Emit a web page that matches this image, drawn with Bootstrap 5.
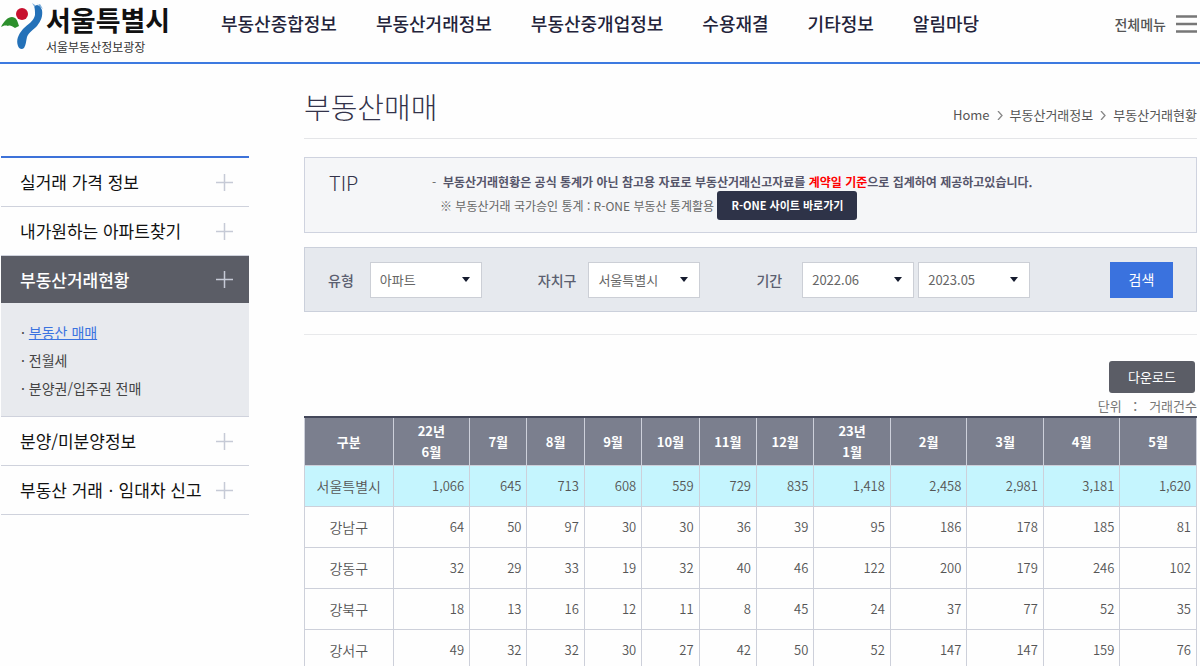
<!DOCTYPE html>
<html lang="ko">
<head>
<meta charset="utf-8">
<meta name="viewport" content="width=device-width, initial-scale=1">
<title>서울부동산정보광장 - 부동산매매</title>
<link href="https://cdn.jsdelivr.net/npm/bootstrap@5.3.0/dist/css/bootstrap.min.css" rel="stylesheet">
<style>
  body { font-family: "Noto Sans CJK KR", sans-serif; font-size: 14px; line-height: 20px; color: #666; background: #fefefe; }
  a { color: inherit; text-decoration: none; }
  .site-head { height: 64px; border-bottom: 2px solid #3d7ae0; }
  .brand { width: 221px; color: #111; }
  .brand-name { font-size: 27px; line-height: 32px; font-weight: 700; }
  .brand-sub { font-size: 12px; line-height: 14px; color: #333; }
  .main-menu { gap: 39px; padding-top: 11px; font-size: 18px; line-height: 24px; font-weight: 500; color: #23233a; }
  .all-menu { font-size: 14px; font-weight: 500; color: #555; gap: 10px; padding: 14px 3px 0 0; }
  .page-body { padding: 0 3px 0 1px; }
  .side { width: 248px; margin-top: 92px; border-top: 2px solid #3d72d9; }
  .side-link { height: 49px; padding: 0 16px 0 19px; font-size: 17px; color: #111; border-bottom: 1px solid #cfd2dc; }
  .side-link.on { height: 47px; background: #5b5d66; color: #fff; font-weight: 500; border: 0; }
  .side-sub { background: #e8eaee; padding: 15px 20px 14px; border-bottom: 1px solid #cfd2dc; color: #444; }
  .side-sub li { line-height: 28px; }
  .side-sub .now { color: #3a73e0; text-decoration: underline; }
  .plus { color: #c6cad6; }
  .content { margin-left: 55px; }
  .title-bar { height: 75px; border-bottom: 1px solid #e4e5e8; }
  .page-title { font-size: 29px; line-height: 40px; font-weight: 300; color: #33334a; margin-top: 22px; }
  .crumbs { font-size: 13px; color: #555; gap: 7px; margin-bottom: 13px; }
  .tip { margin-top: 18px; height: 76px; background: #f5f6f8; border: 1px solid #cfd3df; padding: 15px 24px; font-size: 12px; line-height: 18px; }
  .tip h2 { width: 103px; font-size: 20px; line-height: 20px; font-weight: 300; color: #33334a; }
  .tip strong { color: #55556a; }
  .tip .hot { color: #f00; }
  .btn-rone { --bs-btn-padding-x: 14px; --bs-btn-padding-y: 0px; --bs-btn-font-size: 11px; --bs-btn-border-radius: 3px; --bs-btn-color: #fff; --bs-btn-bg: #2e3348; --bs-btn-hover-color: #fff; --bs-btn-hover-bg: #404660; --bs-btn-border-width: 0; height: 29px; font-weight: 700; }
  .filters { margin-top: 14px; height: 65px; background: #e6e9ee; border: 1px solid #cbd0db; padding: 0 23px; gap: 56px; }
  .filters label { font-weight: 500; color: #5b5f70; }
  .gap-label { gap: 12px; }
  .pick { width: 112px; height: 36px; border-radius: 0; border-color: #cccfd6; padding: 0 24px 0 9px; font-size: 13px; color: #666; background-color: #fff;
    background-image: url("data:image/svg+xml,%3Csvg xmlns='http://www.w3.org/2000/svg' viewBox='0 0 8 5'%3E%3Cpath fill='%23151b2e' d='M0 0h8L4 5z'/%3E%3C/svg%3E"); background-size: 8px 5px; background-position: right 11px center; }
  .btn-find { width: 63px; height: 36px; padding: 0; border: 0; border-radius: 0; background: #3a72de; color: #fff; font-size: 14px; }
  .rule { margin-top: 22px; border-top: 1px solid #e8e9eb; padding-top: 26px; }
  .btn-down { width: 86px; height: 32px; padding: 0; border: 0; border-radius: 3px; background: #5b5d66; color: #fff; font-size: 13px; margin-right: 2px; }
  .unit { font-size: 13px; line-height: 16px; color: #777; margin-top: 5px; margin-bottom: 2px; white-space: pre; }
  .deals { table-layout: fixed; border-color: #cdd0da; margin: 0; color: #555; font-size: 13px; }
  .deals > :not(caption) > * > * { padding: 0 5px; height: 41px; text-align: right; vertical-align: middle; color: inherit; background: none; font-weight: 350; }
  .deals > thead > tr > th { height: 48px; font-size: 13px; line-height: 21px; font-weight: 700; color: #fff; background: #7b7f8e; text-align: center; border-top: 2px solid #44485a; }
  .deals > tbody > tr > th { font-size: 14px; text-align: center; }
  .deals > tbody > .total { background: #c5f5fe; }
  .c-name { width: 88px; } .c-wide { width: 76px; } .c-thin { width: 57px; }
</style>
</head>
<body>
<header class="site-head d-flex align-items-start">
  <a class="brand d-flex flex-shrink-0" href="#">
    <svg class="flex-shrink-0" width="46" height="52" viewBox="0 0 46 52" aria-hidden="true">
      <path fill="#2471b8" d="M34 6l3-1 3 1 2 4c1 6-1 11-5 16-4 4-8 6-10 11-1 4-1 8-3 11-2 2-5 1-6-2-2-6 0-11 5-17 5-5 11-8 12-14 0-4 0-6-1-9z"/>
      <path fill="#7fb0dc" d="M32 3l3 2v3zM37 3l1 2 2-1 3 5-4-3z"/>
      <path fill="#2c8f2c" d="M1 27C4 21 8 17 12 17c3 0 5 2 6 6l1 3-4 2c-3-2-5-3-7-2-3-1-5 0-7 1z"/>
      <circle cx="22" cy="14" r="6" fill="#c8102e"/>
    </svg>
    <span class="d-flex flex-column pt-1"><span class="brand-name">서울특별시</span><span class="brand-sub mt-1">서울부동산정보광장</span></span>
  </a>
  <nav class="main-menu d-flex text-nowrap">
    <a href="#">부동산종합정보</a><a href="#">부동산거래정보</a><a href="#">부동산중개업정보</a><a href="#">수용재결</a><a href="#">기타정보</a><a href="#">알림마당</a>
  </nav>
  <a class="all-menu ms-auto d-flex align-items-center text-nowrap" href="#">전체메뉴
    <svg width="21" height="18" aria-hidden="true"><path d="M0 1.500h21M0 9h21M0 16.500h21" stroke="#777" stroke-width="2.500"/></svg>
  </a>
</header>

<div class="page-body d-flex">
  <aside class="side flex-shrink-0">
    <a class="side-link d-flex align-items-center justify-content-between" href="#">실거래 가격 정보<svg class="plus" width="17" height="17" aria-hidden="true"><path d="M0 8.500h17M8.500 0v17" stroke="currentColor" stroke-width="1.500"/></svg></a>
    <a class="side-link d-flex align-items-center justify-content-between" href="#">내가원하는 아파트찾기<svg class="plus" width="17" height="17" aria-hidden="true"><path d="M0 8.500h17M8.500 0v17" stroke="currentColor" stroke-width="1.500"/></svg></a>
    <a class="side-link on d-flex align-items-center justify-content-between" href="#">부동산거래현황<svg class="plus" width="17" height="17" aria-hidden="true"><path d="M0 8.500h17M8.500 0v17" stroke="currentColor" stroke-width="1.500"/></svg></a>
    <ul class="side-sub list-unstyled m-0">
      <li>· <a class="now" href="#">부동산 매매</a></li>
      <li>· <a href="#">전월세</a></li>
      <li>· <a href="#">분양권/입주권 전매</a></li>
    </ul>
    <a class="side-link d-flex align-items-center justify-content-between" href="#">분양/미분양정보<svg class="plus" width="17" height="17" aria-hidden="true"><path d="M0 8.500h17M8.500 0v17" stroke="currentColor" stroke-width="1.500"/></svg></a>
    <a class="side-link d-flex align-items-center justify-content-between" href="#">부동산 거래ㆍ임대차 신고<svg class="plus" width="17" height="17" aria-hidden="true"><path d="M0 8.500h17M8.500 0v17" stroke="currentColor" stroke-width="1.500"/></svg></a>
  </aside>

  <main class="content flex-grow-1">
    <div class="title-bar d-flex justify-content-between align-items-start">
      <h1 class="page-title mb-0">부동산매매</h1>
      <nav class="crumbs d-flex align-items-center mt-auto">
        <a href="#">Home</a>
        <svg width="6" height="9" aria-hidden="true"><path d="M1 0l4 4.500L1 9" fill="none" stroke="#888" stroke-width="1.300"/></svg>
        <a href="#">부동산거래정보</a>
        <svg width="6" height="9" aria-hidden="true"><path d="M1 0l4 4.500L1 9" fill="none" stroke="#888" stroke-width="1.300"/></svg>
        <a href="#">부동산거래현황</a>
      </nav>
    </div>

    <section class="tip d-flex align-items-start">
      <h2 class="m-0 flex-shrink-0">TIP</h2>
      <div class="text-nowrap">
        <div>-&nbsp; <strong>부동산거래현황은 공식 통계가 아닌 참고용 자료로 부동산거래신고자료를 <span class="hot">계약일 기준</span>으로 집계하여 제공하고있습니다.</strong></div>
        <div class="d-flex align-items-center ps-2"><span>※ 부동산거래 국가승인 통계 : R-ONE 부동산 통계활용&nbsp;</span><button class="btn btn-rone" type="button">R-ONE 사이트 바로가기</button></div>
      </div>
    </section>

    <form class="filters d-flex align-items-center">
      <div class="d-flex align-items-center gap-3"><label for="kind">유형</label><select id="kind" class="form-select pick"><option>아파트</option></select></div>
      <div class="d-flex align-items-center gap-label"><label for="gu">자치구</label><select id="gu" class="form-select pick"><option>서울특별시</option></select></div>
      <div class="d-flex align-items-center"><label class="me-3" for="from">기간</label><select id="from" class="form-select pick ms-1 me-1"><option>2022.06</option></select><select class="form-select pick" aria-label="종료 월"><option>2023.05</option></select></div>
      <button class="btn btn-find ms-auto" type="button">검색</button>
    </form>

    <div class="rule d-flex flex-column align-items-end">
      <button class="btn btn-down" type="button">다운로드</button>
      <div class="unit">단위  ：  거래건수</div>
    </div>

    <table class="table table-bordered deals">
      <colgroup><col class="c-name"><col class="c-wide"><col class="c-thin" span="6"><col class="c-wide" span="5"></colgroup>
      <thead><tr><th>구분</th><th>22년<br>6월</th><th>7월</th><th>8월</th><th>9월</th><th>10월</th><th>11월</th><th>12월</th><th>23년<br>1월</th><th>2월</th><th>3월</th><th>4월</th><th>5월</th></tr></thead>
      <tbody>
        <tr class="total"><th>서울특별시</th><td>1,066</td><td>645</td><td>713</td><td>608</td><td>559</td><td>729</td><td>835</td><td>1,418</td><td>2,458</td><td>2,981</td><td>3,181</td><td>1,620</td></tr>
        <tr><th>강남구</th><td>64</td><td>50</td><td>97</td><td>30</td><td>30</td><td>36</td><td>39</td><td>95</td><td>186</td><td>178</td><td>185</td><td>81</td></tr>
        <tr><th>강동구</th><td>32</td><td>29</td><td>33</td><td>19</td><td>32</td><td>40</td><td>46</td><td>122</td><td>200</td><td>179</td><td>246</td><td>102</td></tr>
        <tr><th>강북구</th><td>18</td><td>13</td><td>16</td><td>12</td><td>11</td><td>8</td><td>45</td><td>24</td><td>37</td><td>77</td><td>52</td><td>35</td></tr>
        <tr><th>강서구</th><td>49</td><td>32</td><td>32</td><td>30</td><td>27</td><td>42</td><td>50</td><td>52</td><td>147</td><td>147</td><td>159</td><td>76</td></tr>
      </tbody>
    </table>
  </main>
</div>
<script src="https://cdn.jsdelivr.net/npm/bootstrap@5.3.0/dist/js/bootstrap.bundle.min.js"></script>
</body>
</html>
